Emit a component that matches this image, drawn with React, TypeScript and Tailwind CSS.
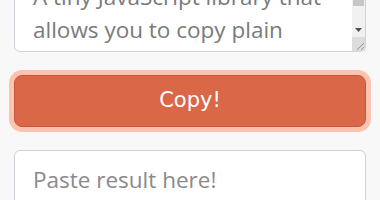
const SOURCE =
  'A tiny JavaScript library that\nallows you to copy plain\ntext or HTML to your clipboard with one click.'

function FakeScrollbar() {
  return (
    <div className="absolute right-[1px] top-[1px] bottom-[1px] flex w-[13px] flex-col bg-[#f1f1f1]">
      <div className="flex h-[14px] items-center justify-center">
        <svg width="7" height="4" viewBox="0 0 7 4">
          <path d="M0 4 L3.5 0 L7 4 Z" fill="#505050" />
        </svg>
      </div>
      <div className="mx-[1px] h-[25px] bg-[#c6c6c6]" />
      <div className="flex-1" />
      <div className="flex h-[14px] items-center justify-center">
        <svg width="7" height="4" viewBox="0 0 7 4">
          <path d="M0 0 L7 0 L3.5 4 Z" fill="#505050" />
        </svg>
      </div>
      <div className="relative h-[14px] bg-[#dcdcdc]">
        <svg className="absolute bottom-0 right-0" width="10" height="10" viewBox="0 0 10 10">
          <path d="M9 2 L2 9 M9 6 L6 9" stroke="#9a9a9a" strokeWidth="1" />
        </svg>
      </div>
    </div>
  )
}

export default function App() {
  return (
    <div className="h-[200px] w-[380px] overflow-hidden bg-[#f8f8f8] font-['Open_Sans','Noto_Sans',sans-serif]">
      <div className="-mt-[34px] flex flex-col gap-[23px] px-[14px]">
        <div className="relative">
          <textarea
            readOnly
            defaultValue={SOURCE}
            className="block h-[86px] w-full resize-none overflow-hidden rounded-[6px] border border-[#cfd4da] bg-white pl-[18px] pr-[28px] pt-[13px] pb-[10px] text-[22.5px] leading-[33px] text-[#7a7a7a] outline-none"
          />
          <FakeScrollbar />
        </div>
        <button className="h-[52px] w-full rounded-[8px] border border-[#c4583c] bg-[#d96748] text-[21px] text-white shadow-[0_0_0_5px_#fdc3b0] font-['DejaVu_Sans','Noto_Sans',sans-serif]">
          Copy!
        </button>
        <textarea
          placeholder="Paste result here!"
          className="block h-[90px] w-full resize-y rounded-[6px] border border-[#cfd4da] bg-white px-[18px] py-[12px] text-[22.5px] leading-[33px] text-[#7a7a7a] placeholder:text-[#8a8a8a] outline-none"
        />
      </div>
    </div>
  )
}
